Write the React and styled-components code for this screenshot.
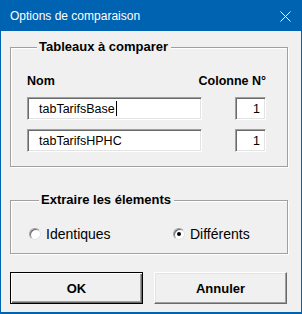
import React from 'react'
import styled, { createGlobalStyle } from 'styled-components'

const Global = createGlobalStyle`
  body {
    margin: 0;
    background: #f0f0f0;
    font-family: 'Liberation Sans', Arial, sans-serif;
  }
`;

const Window = styled.div`
  width: 302px;
  height: 314px;
  box-sizing: border-box;
  border: 1px solid #0063b1;
  border-top: none;
  border-bottom-width: 2px;
  background: #f0f0f0;
  display: flex;
  flex-direction: column;
  overflow: hidden;
`;

const TitleBar = styled.div`
  height: 31px;
  flex: none;
  background: #0063b1;
  color: #fff;
  font-size: 12px;
  display: flex;
  align-items: center;
  justify-content: space-between;
  padding: 1px 10px 0 9px;
  box-sizing: border-box;
`;

const Body = styled.div`
  padding: 8px 13px 9px 9px;
  display: flex;
  flex-direction: column;
`;

const Frame = styled.fieldset`
  margin: 0 0 ${p => p.$gap || 0}px 0;
  padding: ${p => p.$pad};
  border: 1px solid #a0a0a0;
  box-shadow: inset 1px 1px 0 #fff, 1px 1px 0 #fff;
  min-width: 0;
`;

const Legend = styled.legend`
  margin-left: 10px;
  padding: 0 3px 0 2px;
  font-size: 13px;
  font-weight: bold;
  line-height: 16px;
  background: #f0f0f0;
  color: #000;
`;

const Rows = styled.div`
  display: flex;
  flex-direction: column;
  gap: 9px;
`;

const Row = styled.div`
  display: flex;
  justify-content: space-between;
  align-items: center;
`;

const Label = styled.div`
  font-size: 12.5px;
  font-weight: bold;
  line-height: 15px;
  white-space: nowrap;
  margin-bottom: -1px;
`;

const Field = styled.div`
  height: 23px;
  box-sizing: border-box;
  background: #fff;
  border: 1px solid;
  border-color: #a0a0a0 #fff #fff #a0a0a0;
  box-shadow: inset 1px 1px 0 #696969, inset -1px -1px 0 #e3e3e3;
  font-size: 12.5px;
  display: flex;
  align-items: center;
  justify-content: ${p => (p.$num ? 'flex-end' : 'flex-start')};
  padding: ${p => (p.$num ? '0 5px 0 0' : '0 0 0 11px')};
  width: ${p => (p.$num ? '31px' : '175px')};
`;

const Caret = styled.span`
  display: inline-block;
  width: 1px;
  height: 15px;
  background: #000;
  margin-left: 1px;
`;

const Radios = styled.div`
  display: grid;
  grid-template-columns: 144px 1fr;
`;

const Option = styled.label`
  display: flex;
  align-items: center;
  gap: 5px;
  font-size: 14px;
  line-height: 16px;
`;

const Dot = styled.span`
  width: 12px;
  height: 12px;
  box-sizing: border-box;
  border-radius: 50%;
  background: #fff;
  border: 1px solid;
  border-color: #a0a0a0 #e3e3e3 #e3e3e3 #a0a0a0;
  box-shadow: inset 1px 1px 0 #696969;
  display: flex;
  align-items: center;
  justify-content: center;
  &::after {
    content: '';
    width: 4px;
    height: 4px;
    border-radius: 50%;
    background: ${p => (p.$on ? '#000' : 'transparent')};
  }
`;

const Buttons = styled.div`
  display: flex;
  gap: 11px;
  margin-top: 18px;
`;

const Button = styled.button`
  width: 133px;
  height: 32px;
  box-sizing: border-box;
  background: #f0f0f0;
  font-family: inherit;
  font-size: 13px;
  font-weight: bold;
  color: #000;
  padding: 0;
  border: 1px solid;
  border-color: ${p => (p.$default ? '#000' : '#fff #696969 #696969 #fff')};
  box-shadow: ${p =>
    p.$default
      ? 'inset 1px 1px 0 #fff, inset -1px -1px 0 #696969, inset -2px -2px 0 #a0a0a0'
      : 'inset -1px -1px 0 #a0a0a0, inset 1px 1px 0 #e3e3e3'};
`;

function Close() {
  return (
    <svg width="11" height="11" viewBox="0 0 11 11">
      <path d="M0.5 0.5 L10.5 10.5 M10.5 0.5 L0.5 10.5" stroke="#fff" strokeWidth="1" />
    </svg>
  )
}

export default function App() {
  return (
    <Window>
      <Global />
      <TitleBar>
        <span>Options de comparaison</span>
        <Close />
      </TitleBar>
      <Body>
        <Frame $pad="19px 21px 14px 16px" $gap={25}>
          <Legend>Tableaux à comparer</Legend>
          <Rows>
            <Row>
              <Label>Nom</Label>
              <Label>Colonne N°</Label>
            </Row>
            <Row>
              <Field>tabTarifsBase<Caret /></Field>
              <Field $num>1</Field>
            </Row>
            <Row>
              <Field>tabTarifsHPHC</Field>
              <Field $num>1</Field>
            </Row>
          </Rows>
        </Frame>
        <Frame $pad="18px 0 11px 18px">
          <Legend>Extraire les élements</Legend>
          <Radios>
            <Option><Dot />Identiques</Option>
            <Option><Dot $on />Différents</Option>
          </Radios>
        </Frame>
        <Buttons>
          <Button $default>OK</Button>
          <Button>Annuler</Button>
        </Buttons>
      </Body>
    </Window>
  )
}
